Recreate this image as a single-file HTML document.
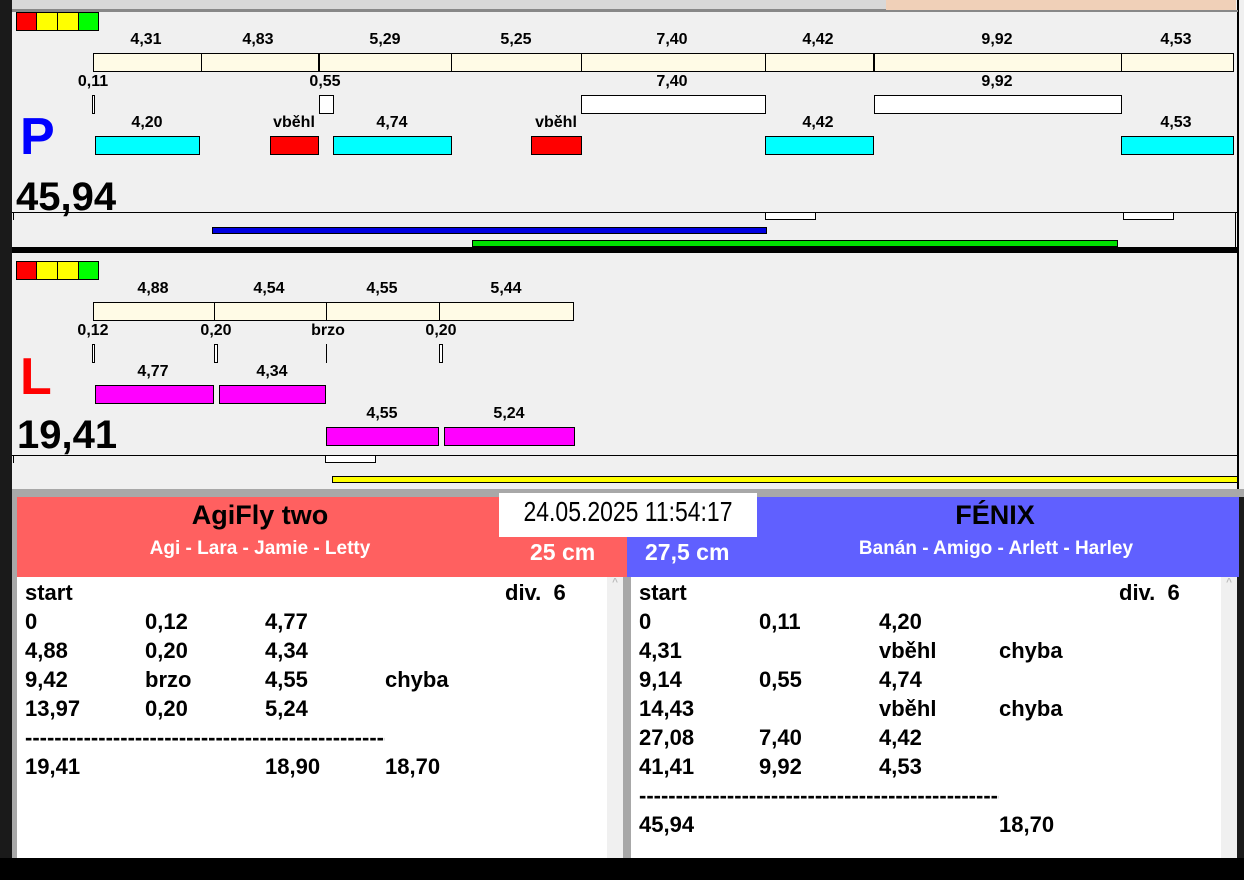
<!DOCTYPE html>
<html><head><meta charset="utf-8"><style>
*{margin:0;padding:0;box-sizing:border-box}
body{width:1244px;height:880px;position:relative;overflow:hidden;background:#f0f0f0;font-family:"Liberation Sans Narrow","Liberation Sans",sans-serif;font-weight:bold}
div{position:absolute}
.l{font-size:16px;color:#000;text-align:center;width:80px;line-height:18px}
.cr{background:#fffbe6;border:1px solid #000;height:19px}
.wb{background:#fff;border:1px solid #000}
.cy{background:#00ffff;border:1px solid #000;height:19px}
.rd{background:#ff0000;border:1px solid #000;height:19px}
.mg{background:#ff00ff;border:1px solid #000;height:19px}
.t{font-size:22px;line-height:26px;color:#000;white-space:nowrap}
.d{overflow:hidden;width:360px}
</style></head><body>
<div style="left:0;top:0;width:12px;height:880px;background:#1a1a1a"></div>
<div style="left:12px;top:0;width:874px;height:10px;background:#d8d8d8;border-bottom:1px solid #888"></div>
<div style="left:886px;top:0;width:350px;height:11px;background:#f0d0b8"></div>
<div style="left:1237px;top:0;width:7px;height:880px;background:#1a1a1a"></div>
<div style="left:1237px;top:0;width:7px;height:490px;background:#f0f0f0;border-left:2px solid #000"></div>
<div style="left:12px;top:10px;width:1226px;height:2px;background:#888"></div>

<div style="left:16px;top:12px;width:21px;height:19px;background:#f00;border:1px solid #000"></div>
<div style="left:36px;top:12px;width:22px;height:19px;background:#ff0;border:1px solid #000"></div>
<div style="left:57px;top:12px;width:22px;height:19px;background:#ff0;border:1px solid #000"></div>
<div style="left:78px;top:12px;width:21px;height:19px;background:#0f0;border:1px solid #000"></div>

<div class="l" style="left:106px;top:31px">4,31</div>
<div class="l" style="left:218px;top:31px">4,83</div>
<div class="l" style="left:345px;top:31px">5,29</div>
<div class="l" style="left:476px;top:31px">5,25</div>
<div class="l" style="left:632px;top:31px">7,40</div>
<div class="l" style="left:778px;top:31px">4,42</div>
<div class="l" style="left:957px;top:31px">9,92</div>
<div class="l" style="left:1136px;top:31px">4,53</div>
<div class="cr" style="left:93px;top:53px;width:1141px"></div>
<div style="left:201px;top:53px;width:1px;height:19px;background:#000"></div>
<div style="left:318px;top:53px;width:2px;height:19px;background:#000"></div>
<div style="left:451px;top:53px;width:1px;height:19px;background:#000"></div>
<div style="left:581px;top:53px;width:1px;height:19px;background:#000"></div>
<div style="left:765px;top:53px;width:1px;height:19px;background:#000"></div>
<div style="left:873px;top:53px;width:2px;height:19px;background:#000"></div>
<div style="left:1121px;top:53px;width:1px;height:19px;background:#000"></div>

<div class="l" style="left:53px;top:73px">0,11</div>
<div class="l" style="left:285px;top:73px">0,55</div>
<div class="l" style="left:632px;top:73px">7,40</div>
<div class="l" style="left:957px;top:73px">9,92</div>
<div class="wb" style="left:92px;top:95px;width:3px;height:19px"></div>
<div class="wb" style="left:319px;top:95px;width:15px;height:19px"></div>
<div class="wb" style="left:581px;top:95px;width:185px;height:19px"></div>
<div class="wb" style="left:874px;top:95px;width:248px;height:19px"></div>

<div style="left:20px;top:108px;font-family:'Liberation Sans',sans-serif;font-size:52px;line-height:58px;color:#0000ff">P</div>
<div class="l" style="left:107px;top:114px">4,20</div>
<div class="l" style="left:254px;top:114px">vběhl</div>
<div class="l" style="left:352px;top:114px">4,74</div>
<div class="l" style="left:516px;top:114px">vběhl</div>
<div class="l" style="left:778px;top:114px">4,42</div>
<div class="l" style="left:1136px;top:114px">4,53</div>
<div class="cy" style="left:95px;top:136px;width:105px"></div>
<div class="rd" style="left:270px;top:136px;width:49px"></div>
<div class="cy" style="left:333px;top:136px;width:119px"></div>
<div class="rd" style="left:531px;top:136px;width:51px"></div>
<div class="cy" style="left:765px;top:136px;width:109px"></div>
<div class="cy" style="left:1121px;top:136px;width:113px"></div>

<div style="left:16px;top:176px;font-size:40px;line-height:42px;color:#000">45,94</div>
<div style="left:12px;top:212px;width:1225px;height:1px;background:#000"></div>
<div style="left:13px;top:212px;width:1px;height:8px;background:#000"></div>
<div style="left:1235px;top:212px;width:1px;height:36px;background:#000"></div>
<div class="wb" style="left:765px;top:212px;width:51px;height:8px"></div>
<div class="wb" style="left:1123px;top:212px;width:51px;height:8px"></div>
<div style="left:212px;top:227px;width:555px;height:7px;background:#0000e0;border:1px solid #000"></div>
<div style="left:472px;top:240px;width:646px;height:7px;background:#00e000;border:1px solid #000"></div>
<div style="left:12px;top:247px;width:1226px;height:6px;background:#000"></div>

<div style="left:16px;top:261px;width:21px;height:19px;background:#f00;border:1px solid #000"></div>
<div style="left:36px;top:261px;width:22px;height:19px;background:#ff0;border:1px solid #000"></div>
<div style="left:57px;top:261px;width:22px;height:19px;background:#ff0;border:1px solid #000"></div>
<div style="left:78px;top:261px;width:21px;height:19px;background:#0f0;border:1px solid #000"></div>
<div class="l" style="left:113px;top:280px">4,88</div>
<div class="l" style="left:229px;top:280px">4,54</div>
<div class="l" style="left:342px;top:280px">4,55</div>
<div class="l" style="left:466px;top:280px">5,44</div>
<div class="cr" style="left:93px;top:302px;width:481px"></div>
<div style="left:214px;top:302px;width:1px;height:19px;background:#000"></div>
<div style="left:326px;top:302px;width:1px;height:19px;background:#000"></div>
<div style="left:439px;top:302px;width:1px;height:19px;background:#000"></div>
<div class="l" style="left:53px;top:322px">0,12</div>
<div class="l" style="left:176px;top:322px">0,20</div>
<div class="l" style="left:288px;top:322px">brzo</div>
<div class="l" style="left:401px;top:322px">0,20</div>
<div class="wb" style="left:92px;top:344px;width:3px;height:19px"></div>
<div class="wb" style="left:214px;top:344px;width:4px;height:19px"></div>
<div style="left:326px;top:344px;width:1px;height:19px;background:#000"></div>
<div class="wb" style="left:439px;top:344px;width:4px;height:19px"></div>
<div style="left:20px;top:348px;font-family:'Liberation Sans',sans-serif;font-size:52px;line-height:58px;color:#ff0000">L</div>
<div class="l" style="left:113px;top:363px">4,77</div>
<div class="l" style="left:232px;top:363px">4,34</div>
<div class="mg" style="left:95px;top:385px;width:119px"></div>
<div class="mg" style="left:219px;top:385px;width:107px"></div>
<div class="l" style="left:342px;top:405px">4,55</div>
<div class="l" style="left:469px;top:405px">5,24</div>
<div class="mg" style="left:326px;top:427px;width:113px"></div>
<div class="mg" style="left:444px;top:427px;width:131px"></div>
<div style="left:17px;top:414px;font-size:40px;line-height:42px;color:#000">19,41</div>
<div style="left:12px;top:455px;width:1225px;height:1px;background:#000"></div>
<div style="left:13px;top:455px;width:1px;height:8px;background:#000"></div>
<div class="wb" style="left:325px;top:455px;width:51px;height:8px"></div>
<div style="left:332px;top:476px;width:906px;height:7px;background:#ffff00;border:1px solid #000"></div>

<div style="left:12px;top:489px;width:1232px;height:8px;background:#a8a8a8"></div>
<div style="left:12px;top:497px;width:5px;height:361px;background:#a8a8a8"></div>

<div style="left:17px;top:497px;width:610px;height:80px;background:#ff6060"></div>
<div style="left:627px;top:497px;width:612px;height:80px;background:#6060ff"></div>
<div style="left:60px;top:499px;width:400px;text-align:center;font-size:27px;line-height:32px;color:#000">AgiFly two</div>
<div style="left:60px;top:538px;width:400px;text-align:center;font-size:19px;line-height:22px;color:#fff">Agi - Lara - Jamie - Letty</div>
<div style="left:530px;top:539px;font-size:23px;line-height:26px;color:#fff">25 cm</div>
<div style="left:645px;top:539px;font-size:23px;line-height:26px;color:#fff">27,5 cm</div>
<div style="left:795px;top:499px;width:400px;text-align:center;font-size:27px;line-height:32px;color:#000">FÉNIX</div>
<div style="left:796px;top:538px;width:400px;text-align:center;font-size:19px;line-height:22px;color:#fff">Banán - Amigo - Arlett - Harley</div>
<div style="left:499px;top:493px;width:258px;height:44px;background:#fff"></div>
<div style="left:499px;top:493px;width:258px;height:40px;font-family:'Liberation Sans',sans-serif;font-weight:normal;font-size:28px;line-height:38px;text-align:center;color:#000;transform:scaleX(0.82);white-space:nowrap">24.05.2025 11:54:17</div>

<div style="left:17px;top:577px;width:590px;height:281px;background:#fff"></div>
<div style="left:607px;top:577px;width:16px;height:281px;background:#f0f0f0;color:#bbb;font-size:10px;text-align:center">^</div>
<div style="left:623px;top:577px;width:8px;height:281px;background:#a8a8a8"></div>
<div style="left:631px;top:577px;width:590px;height:281px;background:#fff"></div>
<div style="left:1221px;top:577px;width:16px;height:281px;background:#f0f0f0;color:#bbb;font-size:10px;text-align:center">^</div>

<div class="t" style="left:25px;top:580px">start</div><div class="t" style="left:505px;top:580px">div.&nbsp; 6</div>
<div class="t" style="left:25px;top:609px">0</div><div class="t" style="left:145px;top:609px">0,12</div><div class="t" style="left:265px;top:609px">4,77</div>
<div class="t" style="left:25px;top:638px">4,88</div><div class="t" style="left:145px;top:638px">0,20</div><div class="t" style="left:265px;top:638px">4,34</div>
<div class="t" style="left:25px;top:667px">9,42</div><div class="t" style="left:145px;top:667px">brzo</div><div class="t" style="left:265px;top:667px">4,55</div><div class="t" style="left:385px;top:667px">chyba</div>
<div class="t" style="left:25px;top:696px">13,97</div><div class="t" style="left:145px;top:696px">0,20</div><div class="t" style="left:265px;top:696px">5,24</div>
<div class="t d" style="left:25px;top:725px">------------------------------------------------------------</div>
<div class="t" style="left:25px;top:754px">19,41</div><div class="t" style="left:265px;top:754px">18,90</div><div class="t" style="left:385px;top:754px">18,70</div>

<div class="t" style="left:639px;top:580px">start</div><div class="t" style="left:1119px;top:580px">div.&nbsp; 6</div>
<div class="t" style="left:639px;top:609px">0</div><div class="t" style="left:759px;top:609px">0,11</div><div class="t" style="left:879px;top:609px">4,20</div>
<div class="t" style="left:639px;top:638px">4,31</div><div class="t" style="left:879px;top:638px">vběhl</div><div class="t" style="left:999px;top:638px">chyba</div>
<div class="t" style="left:639px;top:667px">9,14</div><div class="t" style="left:759px;top:667px">0,55</div><div class="t" style="left:879px;top:667px">4,74</div>
<div class="t" style="left:639px;top:696px">14,43</div><div class="t" style="left:879px;top:696px">vběhl</div><div class="t" style="left:999px;top:696px">chyba</div>
<div class="t" style="left:639px;top:725px">27,08</div><div class="t" style="left:759px;top:725px">7,40</div><div class="t" style="left:879px;top:725px">4,42</div>
<div class="t" style="left:639px;top:754px">41,41</div><div class="t" style="left:759px;top:754px">9,92</div><div class="t" style="left:879px;top:754px">4,53</div>
<div class="t d" style="left:639px;top:783px">------------------------------------------------------------</div>
<div class="t" style="left:639px;top:812px">45,94</div><div class="t" style="left:999px;top:812px">18,70</div>

<div style="left:0;top:858px;width:1244px;height:22px;background:#000"></div>
</body></html>
